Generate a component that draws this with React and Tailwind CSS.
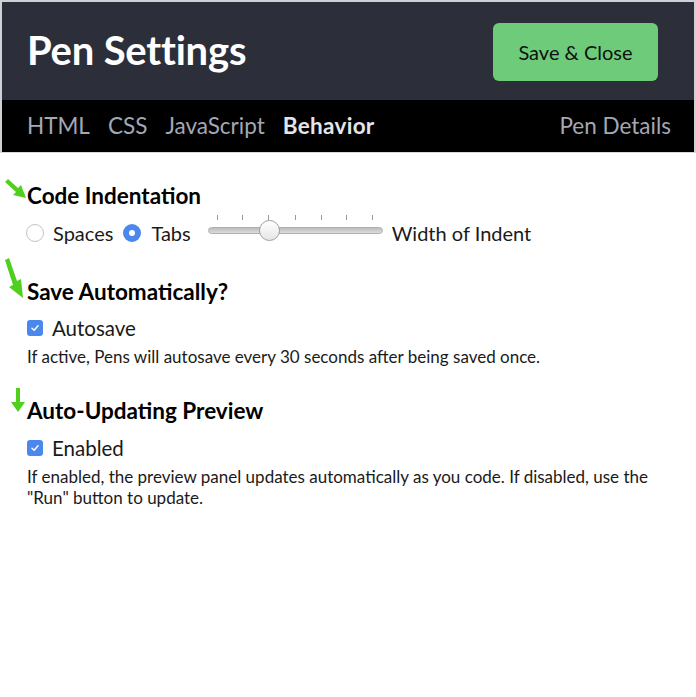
import React from "react";

function Radio({ checked }) {
  return checked ? (
    <span className="w-[18px] h-[18px] rounded-full bg-[#4a88ec] flex items-center justify-center shrink-0">
      <span className="block w-[6px] h-[6px] rounded-full bg-white" />
    </span>
  ) : (
    <span className="block w-[18px] h-[18px] rounded-full border border-[#c4c4c4] bg-white shrink-0" />
  );
}

function Check() {
  return (
    <span className="w-[16px] h-[16px] rounded-[3px] bg-[#4a88ec] flex items-center justify-center shrink-0">
      <svg width="10" height="10" viewBox="0 0 10 10">
        <path d="M2 5.2 L4.2 7.3 L8 2.8" fill="none" stroke="white" strokeWidth="1.5" strokeLinecap="round" strokeLinejoin="round" />
      </svg>
    </span>
  );
}

function Slider() {
  const ticks = [9, 34, 60, 87, 113, 138, 164];
  return (
    <div className="relative w-[175px] h-[30px] shrink-0">
      {ticks.map((t, i) => (
        <span key={i} className="absolute top-[3px] w-px h-[5px] bg-[#9a9a9a]" style={{ left: t }} />
      ))}
      <div className="absolute left-0 right-0 top-[15px] h-[7px] rounded-full bg-gradient-to-b from-[#bdbdbd] to-[#dcdcdc] border border-[#b0b0b0]" />
      <div className="absolute left-[51px] top-[8px] w-[21px] h-[21px] rounded-full bg-gradient-to-b from-white to-[#e6e6e6] border border-[#9e9e9e]" />
    </div>
  );
}

export default function App() {
  return (
    <div className="w-[696px] h-[697px] bg-white relative" style={{ fontFamily: "Lato, 'Open Sans', sans-serif" }}>
      <div className="border-t-2 border-x-2 border-[#cfd0d3]">
        <div className="h-[98px] bg-[#2c2f3a] flex items-center justify-between pl-[25px] pr-[36px]">
          <h1 className="text-white text-[40px] font-bold leading-none tracking-[-0.2px] pb-[2px]">Pen Settings</h1>
          <button className="w-[165px] h-[58px] rounded-[6px] bg-[#6dcb7a] text-[#111] text-[20px] leading-none flex items-center justify-center mt-[2px]">
            Save &amp; Close
          </button>
        </div>
        <div className="h-[52px] bg-black flex items-center justify-between pl-[25px] pr-[23px] text-[22.5px] text-[#a4a7b4]">
          <div className="flex gap-[18px]">
            <span>HTML</span>
            <span>CSS</span>
            <span>JavaScript</span>
            <span className="font-bold text-[#e4e5ea] tracking-[0.3px]">Behavior</span>
          </div>
          <span>Pen Details</span>
        </div>
      </div>
      <div className="h-px bg-[#d9d9d9]" />

      <div className="pl-[27px] pt-[28px] text-black">
        <h2 className="text-[22.5px] font-bold leading-[30px]">Code Indentation</h2>
        <div className="flex items-center mt-[8px] h-[28px] text-[20px] text-[#1a1a1a]">
          <span className="-ml-[1px]"><Radio /></span>
          <span className="ml-[9px]">Spaces</span>
          <span className="ml-[10px]"><Radio checked /></span>
          <span className="ml-[10px]">Tabs</span>
          <span className="ml-[17px] -mt-[12px]"><Slider /></span>
          <span className="ml-[9px]">Width of Indent</span>
        </div>

        <h2 className="text-[22.5px] font-bold leading-[30px] mt-[30px]">Save Automatically?</h2>
        <div className="flex items-center mt-[7px] h-[28px] text-[20.5px] text-[#1a1a1a]">
          <Check />
          <span className="ml-[9px]">Autosave</span>
        </div>
        <p className="text-[17px] leading-[21px] mt-[4px] text-[#1a1a1a]">
          If active, Pens will autosave every 30 seconds after being saved once.
        </p>

        <h2 className="text-[22.5px] font-bold leading-[30px] mt-[29px]">Auto-Updating Preview</h2>
        <div className="flex items-center mt-[8px] h-[28px] text-[20.5px] text-[#1a1a1a]">
          <Check />
          <span className="ml-[9px]">Enabled</span>
        </div>
        <p className="text-[17px] leading-[21px] mt-[4px] text-[#1a1a1a] w-[640px]">
          If enabled, the preview panel updates automatically as you code. If disabled, use the "Run" button to update.
        </p>
      </div>

      <svg className="absolute left-[4px] top-[178px] w-[24px] h-[22px]" viewBox="0 0 24 22">
        <path d="M1 4 L4 1 L14 10 L17 7 L22 20 L9 17 L12 14 Z" fill="#4fd01c" />
      </svg>
      <svg className="absolute left-[4px] top-[257px] w-[22px] h-[42px]" viewBox="0 0 22 42">
        <path d="M1 3 L5 1 L13 24 L17 22 L19 41 L5 30 L9 28 Z" fill="#4fd01c" />
      </svg>
      <svg className="absolute left-[10px] top-[387px] w-[16px] h-[26px]" viewBox="0 0 16 26">
        <path d="M6 1 L10 1 L10 15 L15 15 L8 25 L1 15 L6 15 Z" fill="#4fd01c" />
      </svg>
    </div>
  );
}
